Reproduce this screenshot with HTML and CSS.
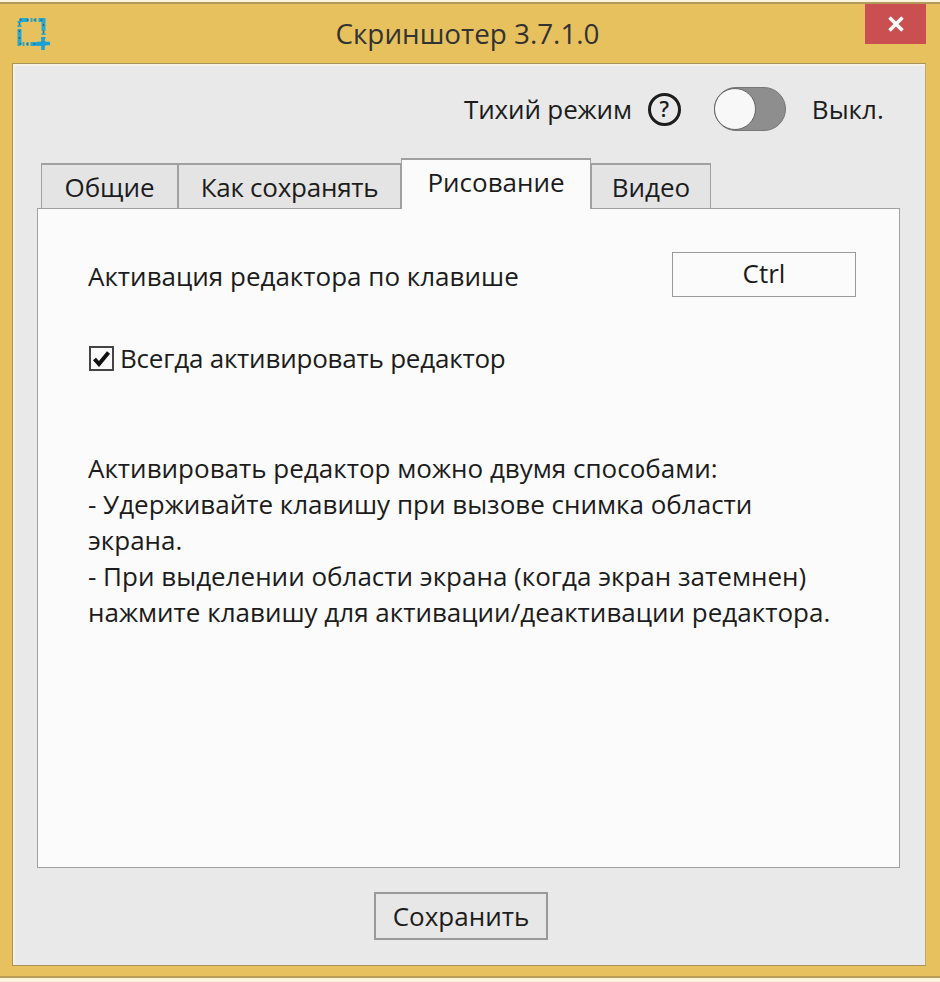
FILE: index.html
```html
<!DOCTYPE html>
<html lang="ru">
<head>
<meta charset="utf-8">
<title>Скриншотер 3.7.1.0</title>
<link rel="stylesheet" href="styles.css">
</head>
<body>
<div class="window">
  <header class="titlebar">
    <svg class="app-icon" width="34" height="36" viewBox="0 0 34 36">
      <rect class="app-frame" x="2.500" y="3" width="24" height="24"/>
      <rect class="app-dots" x="2.500" y="3" width="24" height="24"/>
      <path class="app-plus" d="M26 20v13M20 26.500h13"/>
    </svg>
    <div class="title">Скриншотер 3.7.1.0</div>
    <button class="close" aria-label="Закрыть">
      <svg width="18" height="16" viewBox="0 0 18 16"><path d="M2.500 1.500l13 13M15.500 1.500l-13 13"/></svg>
    </button>
  </header>
  <main class="client">
    <div class="quiet-row">
      <span class="quiet-label">Тихий режим</span>
      <span class="help">?</span>
      <span class="toggle"><span class="knob"></span></span>
      <span class="state">Выкл.</span>
    </div>
    <nav class="tabs">
      <div class="tab tab-general">Общие</div>
      <div class="tab tab-save">Как сохранять</div>
      <div class="tab tab-active">Рисование</div>
      <div class="tab tab-video">Видео</div>
    </nav>
    <section class="page">
      <div class="hotkey-row">
        <span class="hotkey-label">Активация редактора по клавише</span>
        <div class="key">Ctrl</div>
      </div>
      <label class="check-row">
        <span class="checkbox">
          <svg width="19" height="17" viewBox="0 0 19 17"><path d="M2.500 9l4.500 5L16.500 2.500"/></svg>
        </span>
        <span class="check-label">Всегда активировать редактор</span>
      </label>
      <p class="info">Активировать редактор можно двумя способами:<br>- Удерживайте клавишу при вызове снимка области<br>экрана.<br>- При выделении области экрана (когда экран затемнен)<br>нажмите клавишу для активации/деактивации редактора.</p>
    </section>
    <footer class="footer"><button class="save">Сохранить</button></footer>
  </main>
</div>
</body>
</html>
```

FILE: styles.css
```css
* { box-sizing: border-box; }
html, body { margin: 0; padding: 0; }
body {
  width: 940px;
  height: 982px;
  overflow: hidden;
  background: #fdf4dc;
  font-family: "Open Sans", "Noto Sans", sans-serif;
  font-size: 26px;
  color: #1c1c1c;
}
.window {
  margin-top: 2px;
  height: 976px;
  background: #e8c15f;
  border-top: 2px solid #b39a5c;
  border-bottom: 2px solid #b79c5a;
  padding: 0 14px 10px 12px;
}
.titlebar {
  height: 59px;
  display: flex;
  align-items: flex-start;
}
.app-icon { margin: 13px 0 0 5px; flex: none; }
.app-frame { fill: none; stroke: #2aa7cf; stroke-width: 4; stroke-dasharray: 9 2 2 2 2 2 7 0; }
.app-dots { fill: none; stroke: #1f6f80; stroke-width: 1.500; stroke-dasharray: 2 5; }
.app-plus { fill: none; stroke: #1c9fd6; stroke-width: 3.500; }
.title {
  flex: 1;
  text-align: center;
  padding: 10px 0 0 19px;
  font-size: 27.800px;
  line-height: 38px;
  color: #333;
}
.close {
  flex: none;
  width: 61px;
  height: 40px;
  border: 0;
  padding: 0;
  background: #c94f50;
  display: flex;
  align-items: center;
  justify-content: center;
}
.close path { fill: none; stroke: #fff; stroke-width: 3.500; }
.client {
  height: 903px;
  background: #e9e9e9;
  border: 1px solid #a99257;
  border-right-color: #c4a862;
  box-shadow: inset 2px 2px 0 #f5f1e4;
  padding: 0 25px 0 24px;
}
.quiet-row {
  height: 94px;
  padding: 0 0 4px 427px;
  display: flex;
  align-items: center;
}
.quiet-label { letter-spacing: -0.150px; }
.help {
  width: 33px;
  height: 33px;
  margin-left: 16px;
  border: 3px solid #1c1c1c;
  border-radius: 50%;
  display: flex;
  align-items: center;
  justify-content: center;
  font-size: 21px;
  font-weight: 600;
  line-height: 1;
}
.toggle {
  width: 72px;
  height: 44px;
  margin-left: 33px;
  border-radius: 22px;
  background: #8f8e8f;
  border: 1px solid #777;
  display: flex;
}
.knob {
  width: 42px;
  height: 42px;
  border-radius: 50%;
  background: #f8f8f8;
  border: 1px solid #666;
  margin-left: -1px;
}
.state { margin-left: 26px; }
.tabs {
  display: flex;
  align-items: flex-end;
  height: 51px;
  padding-left: 4px;
  margin-bottom: -1px;
  position: relative;
  z-index: 1;
}
.tab {
  height: 46px;
  background: #e4e4e4;
  border: 2px solid #a0a0a0;
  border-bottom: 1px solid #a0a0a0;
  border-right-width: 1px;
  border-left-width: 1px;
  display: flex;
  align-items: center;
  justify-content: center;
}
.tab-general { width: 137px; }
.tab-save { width: 223px; letter-spacing: -0.250px; }
.tab-active {
  width: 190px;
  height: 51px;
  background: #fbfbfb;
  border-bottom: 0;
  padding-bottom: 6px;
}
.tab-video { width: 120px; }
.page {
  height: 660px;
  background: #fbfbfb;
  border: 1px solid #a0a0a0;
  padding: 0 43px 0 50px;
}
.hotkey-row {
  height: 88px;
  padding-top: 43px;
  display: flex;
  align-items: center;
  justify-content: space-between;
}
.hotkey-label { padding-top: 2px; }
.key {
  width: 184px;
  height: 45px;
  background: #fbfbfb;
  border: 1px solid #9a9a9a;
  display: flex;
  align-items: center;
  justify-content: center;
  padding-bottom: 3px;
}
.check-row {
  display: flex;
  align-items: center;
  height: 36px;
  margin-top: 43px;
}
.check-label { letter-spacing: -0.220px; }
.checkbox {
  width: 25px;
  height: 25px;
  margin-right: 6px;
  margin-left: 1px;
  border: 2px solid #444;
  background: #fafafa;
  display: flex;
  align-items: center;
  justify-content: center;
}
.checkbox path { fill: none; stroke: #111; stroke-width: 4; }
.info {
  margin: 74px 0 0;
  line-height: 36px;
  white-space: nowrap;
}
.footer {
  height: 97px;
  padding: 24px 0 0 337px;
}
.save {
  display: block;
  width: 174px;
  height: 48px;
  background: #e7e7e7;
  border: 2px solid #999;
  font: inherit;
  color: inherit;
  padding: 0;
}
```
